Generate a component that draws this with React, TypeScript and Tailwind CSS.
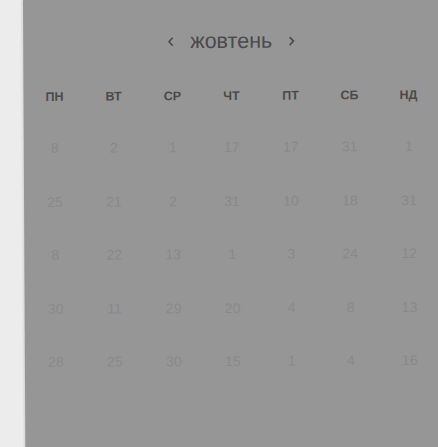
import React from "react";

const weekDays = ["ПН", "ВТ", "СР", "ЧТ", "ПТ", "СБ", "НД"];

const rows: number[][] = [
  [8, 2, 1, 17, 17, 31, 1],
  [25, 21, 2, 31, 10, 18, 31],
  [8, 22, 13, 1, 3, 24, 12],
  [30, 11, 29, 20, 4, 8, 13],
  [28, 25, 30, 15, 1, 4, 16],
];

const Chevron: React.FC<{ dir: "left" | "right" }> = ({ dir }) => (
  <svg width="7" height="11" viewBox="0 0 7 11" fill="none" className="mt-[1px]">
    <path
      d={dir === "left" ? "M5.5 1.5 L1.8 5.5 L5.5 9.5" : "M1.5 1.5 L5.2 5.5 L1.5 9.5"}
      stroke="#4a4a4a"
      strokeWidth="1.6"
    />
  </svg>
);

const App: React.FC = () => {
  return (
    <div className="w-[438px] h-[447px] bg-[#ececec] overflow-hidden font-['Liberation_Sans',Arial,sans-serif]">
      <div className="ml-[23px] w-[416px] h-[460px] bg-[#969696] shadow-[-1px_0_3px_rgba(0,0,0,0.12)] origin-top-left -rotate-[0.3deg]">
        {/* month switcher */}
        <div className="pt-[28px] h-[56px] flex items-center justify-center gap-[16px] text-[#4a4a4a]">
          <Chevron dir="left" />
          <span className="text-[21.5px] leading-[28px]">жовтень</span>
          <Chevron dir="right" />
        </div>

        <div className="pl-[1.5px]">
          <div className="grid grid-cols-[repeat(7,59px)] h-[66px] items-center pt-[16px]">
            {weekDays.map((d) => (
              <div key={d} className="text-center text-[12.5px] font-bold text-[#4a4a4a]">
                {d}
              </div>
            ))}
          </div>

          {rows.map((row, i) => (
            <div key={i} className="grid grid-cols-[repeat(7,59px)] h-[53.5px] items-center">
              {row.map((n, j) => (
                <div key={j} className="text-center text-[14px] text-[#898989]">
                  {n}
                </div>
              ))}
            </div>
          ))}
        </div>
      </div>
    </div>
  );
};

export default App;
